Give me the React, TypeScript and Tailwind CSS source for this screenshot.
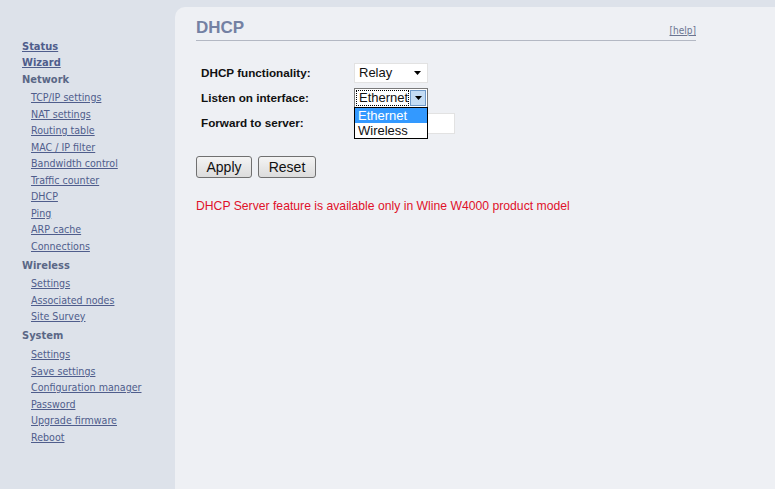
import React from "react";

const side = { fontFamily: '"DejaVu Sans Condensed", "DejaVu Sans", Tahoma, sans-serif' };
const arial = { fontFamily: '"Liberation Sans", Arial, sans-serif' };

const groups = [
  {
    title: "Network",
    cls: "mt-[1px] mb-[1px]",
    items: ["TCP/IP settings", "NAT settings", "Routing table", "MAC / IP filter", "Bandwidth control", "Traffic counter", "DHCP", "Ping", "ARP cache", "Connections"],
  },
  { title: "Wireless", cls: "mt-[4px] mb-[1px]", items: ["Settings", "Associated nodes", "Site Survey"] },
  { title: "System", cls: "mt-[3.5px] mb-[2px]", items: ["Settings", "Save settings", "Configuration manager", "Password", "Upgrade firmware", "Reboot"] },
];

function Arrow() {
  return (
    <svg width="7" height="4" viewBox="0 0 7 4">
      <path d="M0 0h7L3.5 4z" fill="#000" />
    </svg>
  );
}

export default function App() {
  return (
    <div className="flex min-h-screen w-full bg-[#dde2ea]">
      <nav className="w-[175px] shrink-0 pl-[22px] pt-[39px] text-[11px] text-[#4f5d8c]" style={side}>
        <a className="block h-4 leading-4 font-bold underline">Status</a>
        <a className="block h-4 leading-4 font-bold underline">Wizard</a>
        {groups.map((g) => (
          <div key={g.title}>
            <div className={`h-4 leading-4 font-bold text-[#5a6786] ${g.cls}`}>{g.title}</div>
            {g.items.map((it) => (
              <a key={it} className="block h-[16.5px] pl-[9px] text-[10.6px] leading-[16.5px] underline">
                {it}
              </a>
            ))}
          </div>
        ))}
      </nav>

      <main className="mt-[7px] flex-1 rounded-tl-[10px] bg-[#eef0f4] pl-[21px] pt-[11px]" style={arial}>
        <div className="flex w-[500px] items-end justify-between border-b border-[#b3b8c3] pb-[2px]">
          <h1 className="text-[17px] leading-5 font-bold text-[#7481a3]">DHCP</h1>
          <a className="mb-[1px] text-[10px] leading-3 text-[#6b7592] underline" style={side}>
            [help]
          </a>
        </div>

        <div className="mt-[19.5px] pl-[5px] text-[11.7px] font-bold text-[#111]">
          <div className="flex h-[25px] items-center">
            <span className="w-[153px]">DHCP functionality:</span>
            <div className="flex h-[20px] w-[74px] items-center justify-between border border-[#e2e2e2] bg-white pr-[6px] pl-[4px] text-[13px] font-normal">
              <span>Relay</span>
              <Arrow />
            </div>
          </div>
          <div className="flex h-[25px] items-center">
            <span className="w-[153px]">Listen on interface:</span>
            <div className="relative">
              <div className="flex h-[20px] w-[74px] items-center border border-[#7a7a7a] bg-white p-[1px] text-[13px] font-normal">
                <span className="flex h-full flex-1 items-center border border-dotted border-[#000] pl-[2px]">Ethernet</span>
                <span className="ml-[1px] flex h-full w-[16px] items-center justify-center border border-[#6e99c8] bg-[#c4dcf4]">
                  <Arrow />
                </span>
              </div>
              <div className="absolute top-[19px] left-0 z-10 w-[74px] border border-black bg-white text-[13px] leading-[15px] font-normal">
                <div className="bg-[#3399ff] pl-[3px] text-white">Ethernet</div>
                <div className="pl-[3px]">Wireless</div>
              </div>
            </div>
          </div>
          <div className="flex h-[25px] items-center">
            <span className="w-[153px]">Forward to server:</span>
            <div className="h-[21px] w-[101px] border border-[#e2e2e2] bg-white" />
          </div>
        </div>

        <div className="mt-[20.5px] flex gap-[6px] text-[14px]">
          <button className="h-[22px] w-[56px] rounded-[3px] border border-[#707070] bg-gradient-to-b from-[#f4f4f4] to-[#dcdcdc] text-[#111]">Apply</button>
          <button className="h-[22px] w-[58px] rounded-[3px] border border-[#707070] bg-gradient-to-b from-[#f4f4f4] to-[#dcdcdc] text-[#111]">Reset</button>
        </div>

        <p className="mt-[21px] text-[12.2px] leading-[14px] text-[#e0102a]">
          DHCP Server feature is available only in Wline W4000 product model
        </p>
      </main>
    </div>
  );
}
